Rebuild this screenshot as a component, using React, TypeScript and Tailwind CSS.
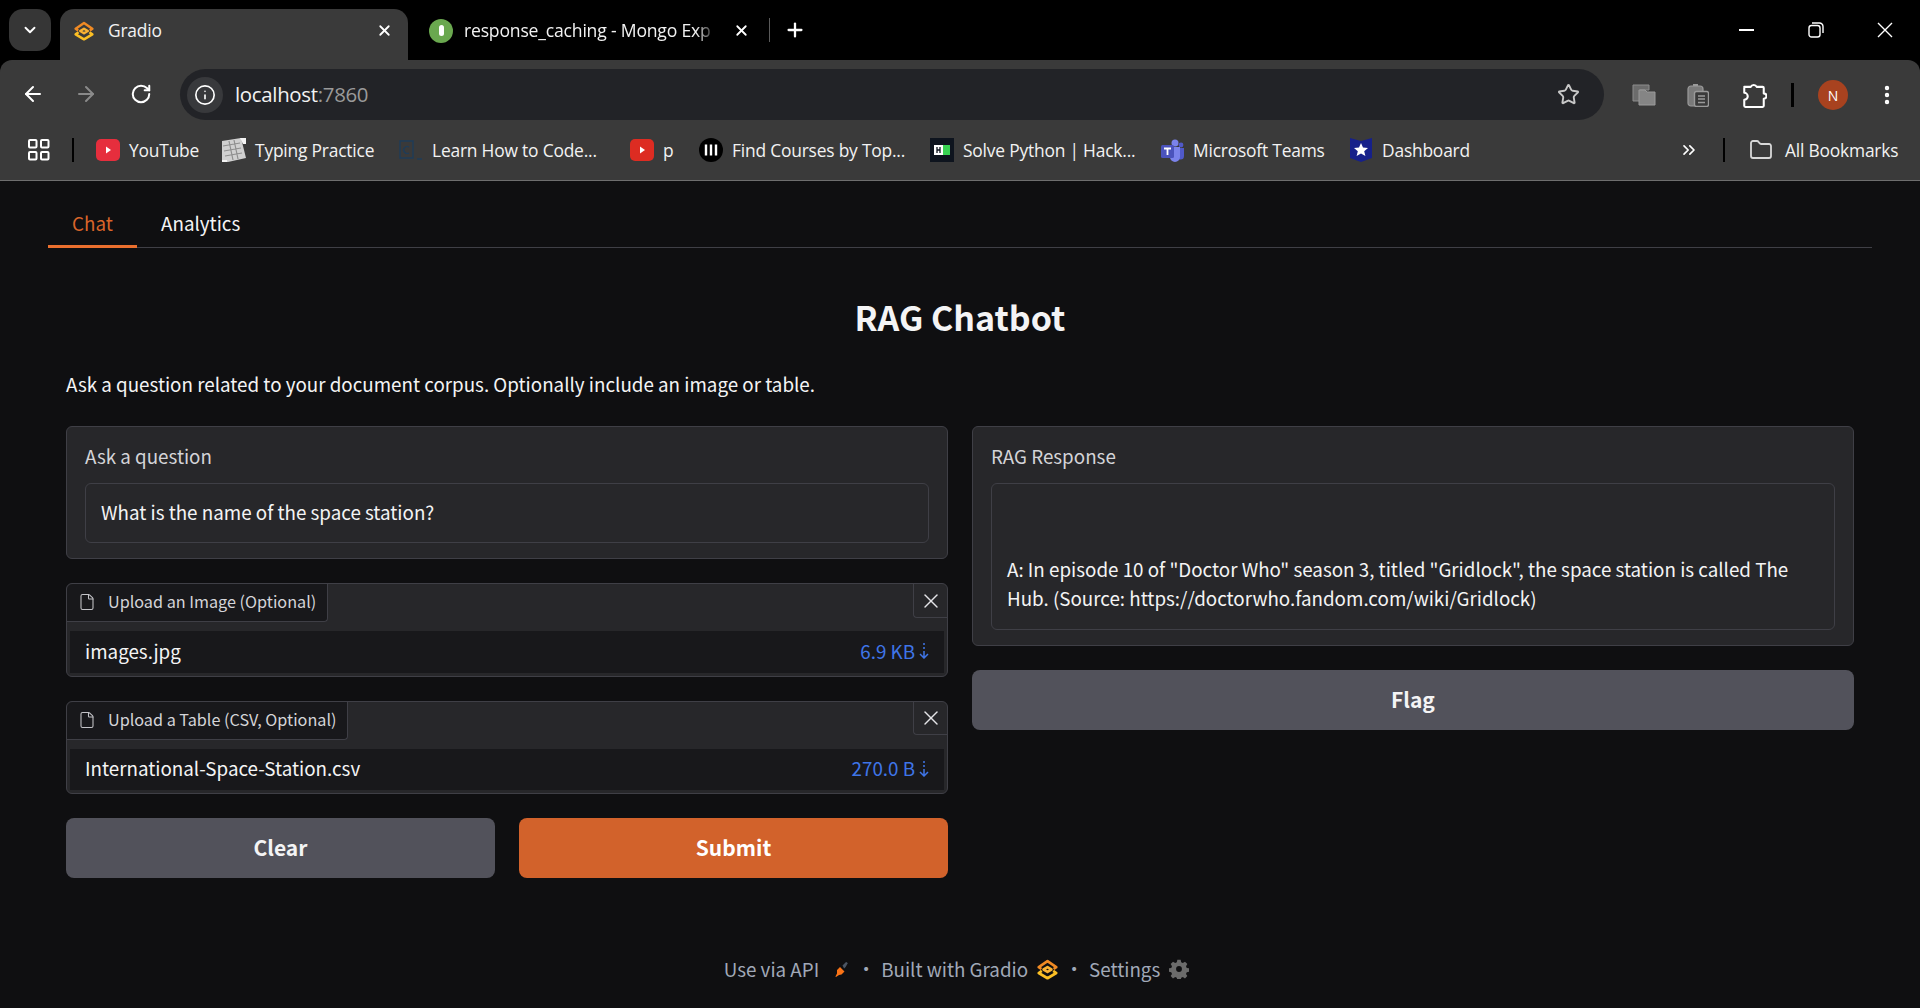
import React from "react";
import { ArrowLeft, ArrowRight, RotateCw, Star, ChevronDown, X, Plus, MoreVertical, File, Folder, ChevronsRight, Info } from "lucide-react";

const chrome = "font-['Open_Sans','Noto_Sans',sans-serif]";

function GradioLogo({ className }: { className: string }) {
  return (
    <svg viewBox="0 0 24 22" className={className} fill="none" strokeWidth="3" strokeLinejoin="round">
      <path d="M5.500 12.500 2 15l10 6 10-6-3.500-2.500" stroke="#fbbf24" />
      <path d="M7.500 11 12 8.300l4.500 2.700L12 13.700z" stroke="#f9b233" />
      <path d="M5 10.500 2 8.300 12 1.500l10 6.800-3 2.200" stroke="#f08a24" />
    </svg>
  );
}

function Yt({ c }: { c: string }) {
  return (
    <svg viewBox="0 0 24 24" className="w-6 h-6 shrink-0">
      <rect y="1" width="24" height="22" rx="5" fill={c} />
      <path d="M10 8.500l5 3.500-5 3.500z" fill="#fff" />
    </svg>
  );
}

function Typing() {
  return (
    <svg viewBox="0 0 24 24" className="w-6 h-6 shrink-0">
      <path d="M0 3 19 0l5 20-18 4H0z" fill="#d0d0d0" />
      <path d="M1 8l17-3M2 13l17-3M3 18l17-3M7 3l4 19M12 2l4 19" stroke="#8f8f8f" strokeWidth="1.200" />
      <path d="M18 0h6v6h-3zM0 22h5v2H0z" fill="#f4f4f4" />
    </svg>
  );
}

function Cc() {
  return (
    <svg viewBox="0 0 24 24" className="w-6 h-6 shrink-0" fill="none" stroke="#1f3c58" strokeWidth="1.400">
      <path d="M1 20V3h13v17zM18 21h5" />
      <path d="M10 9a3.500 3.500 0 1 0 0 6" />
    </svg>
  );
}

function Ph() {
  return (
    <svg viewBox="0 0 24 24" className="w-6 h-6 shrink-0">
      <circle cx="12" cy="12" r="12" fill="#000" />
      <path d="M7 6.500v11M12 6.500v11M17 6.500v11" stroke="#fff" strokeWidth="2.400" />
    </svg>
  );
}

function Hr() {
  return (
    <svg viewBox="0 0 24 24" className="w-6 h-6 shrink-0">
      <rect width="24" height="24" fill="#0e141e" />
      <rect x="4" y="7" width="9" height="10" fill="#fff" />
      <rect x="13" y="7" width="7" height="10" fill="#39d353" />
      <path d="M7 9v6M10 9v6M7 12h3" stroke="#0e141e" strokeWidth="1.300" />
    </svg>
  );
}

function Teams() {
  return (
    <svg viewBox="0 0 24 24" className="w-6 h-6 shrink-0">
      <circle cx="15" cy="5" r="3.500" fill="#7b83eb" />
      <circle cx="21" cy="7" r="2.400" fill="#5059c9" />
      <path d="M17 10h7v8a3.500 3.500 0 0 1-7 0z" fill="#5059c9" />
      <path d="M9 9h11v10a5 5 0 0 1-10 0z" fill="#7b83eb" />
      <rect x="1" y="7" width="13" height="13" rx="1.500" fill="#4b53bc" />
      <path d="M4 10.500h7M7.500 10.500V17" stroke="#fff" strokeWidth="1.800" />
    </svg>
  );
}

function Dash() {
  return (
    <svg viewBox="0 0 24 24" className="w-6 h-6 shrink-0">
      <path d="M1 0l11 3 11-3v20l-11 4-11-4z" fill="#16208a" />
      <path d="M12 5l2 4.600 5 .4-3.800 3.200 1.200 4.800-4.400-2.600L7.600 18l1.200-4.800L5 10l5-.4z" fill="#fff" />
    </svg>
  );
}

function Bookmark({ icon, label, w }: { icon: React.ReactNode; label: string; w: string }) {
  return (
    <div className={`flex items-center gap-[9px] shrink-0 ${w}`}>
      {icon}
      <span className="whitespace-nowrap text-[17.4px] tracking-[-0.2px] text-[#f2f2f2]">{label}</span>
    </div>
  );
}

function BrowserChrome() {
  return (
    <div className={`${chrome} shrink-0 bg-black`}>
      <div className="h-[60px] flex pl-[9px] pt-[9px]">
        <div className="w-[42px] h-[42px] rounded-[14px] bg-[#363636] flex items-center justify-center text-white">
          <ChevronDown size={18} strokeWidth={2.500} />
        </div>
        <div className="ml-[9px] w-[348px] h-[51px] rounded-t-[14px] bg-[#3a3a3a] flex items-center pl-[14px] pr-[15px] pb-[8px]">
          <GradioLogo className="w-[20px] h-[20px]" />
          <span className="ml-[14px] text-[17.4px] tracking-[-0.2px] text-[#f2f2f2]">Gradio</span>
          <X size={17} strokeWidth={2.500} className="ml-auto text-white" />
        </div>
        <div className="w-[361px] h-[51px] flex items-center pl-[21px] pb-[8px]">
          <div className="w-6 h-6 rounded-full bg-[#6aa84f] flex items-center justify-center shrink-0">
            <div className="w-[5px] h-[11px] rounded-full bg-white" />
          </div>
          <span className="ml-[11px] w-[252px] overflow-hidden whitespace-nowrap text-[17.6px] tracking-[-0.2px] text-[#f2f2f2] [mask-image:linear-gradient(to_right,black_92%,transparent)]">response_caching - Mongo Exp</span>
          <X size={17} strokeWidth={2.500} className="ml-[17px] text-white shrink-0" />
        </div>
        <div className="w-px h-6 bg-[#5a5a5a] mt-[9px]" />
        <Plus size={22} strokeWidth={2.500} className="ml-[14px] mt-[10px] text-white" />
        <div className="ml-auto flex items-start pt-[13px] text-white">
          <div className="w-[15px] h-[1.500px] bg-white mt-[7px] mr-[54px]" />
          <svg viewBox="0 0 16 16" className="w-[16px] h-[16px] mr-[53px]" fill="none" stroke="#fff" strokeWidth="1.400">
            <rect x="1" y="3.500" width="11" height="11.500" rx="2.500" />
            <path d="M4 1h7.500A3.500 3.500 0 0 1 15 4.500V11" />
          </svg>
          <svg viewBox="0 0 16 16" className="w-[16px] h-[16px] mr-[27px]" fill="none" stroke="#fff" strokeWidth="1.400">
            <path d="M1 1l14 14M15 1 1 15" />
          </svg>
        </div>
      </div>
      <div className="bg-[#3a3a3a] rounded-t-[12px] border-b border-[#6e6e6e] h-[121px]">
        <div className="h-[60px] flex items-start pt-[9px] pl-[21px] text-white">
          <ArrowLeft size={24} strokeWidth={2} className="mt-[13px]" />
          <ArrowRight size={24} strokeWidth={2} className="ml-[29px] mt-[13px] text-[#8a8a8a]" />
          <RotateCw size={22} strokeWidth={2.200} className="ml-[32px] mt-[14px]" />
          <div className="ml-[28px] w-[1424px] h-[51px] rounded-full bg-[#222327] flex items-center pl-[7px] pr-[24px]">
            <div className="w-9 h-9 rounded-full bg-[#38393c] flex items-center justify-center">
              <Info size={22} strokeWidth={1.800} />
            </div>
            <span className="ml-[12px] text-[20.4px] tracking-[-0.3px] text-[#f2f2f2]">localhost<span className="text-[#9a9a9a]">:7860</span></span>
            <Star size={23} strokeWidth={2} className="ml-auto text-[#c8c8c8]" />
          </div>
          <div className="flex items-center h-[42px] mt-[5px]">
            <svg viewBox="0 0 24 22" className="ml-[28px] w-6 h-[22px]">
              <path d="M1 1h16v5H8v11H1z" fill="#6c6c6c" stroke="#8c8c8c" strokeWidth="1" />
              <path d="M7 6h6l2 2h8v13H7z" fill="#858585" stroke="#9a9a9a" strokeWidth="1" />
            </svg>
            <svg viewBox="0 0 22 24" className="ml-[31px] w-[22px] h-6">
              <rect x="1" y="3" width="15" height="20" rx="3" fill="#7a7a7a" stroke="#9a9a9a" strokeWidth="1.200" />
              <path d="M6 3h5V1H6z" fill="#9a9a9a" />
              <rect x="7.500" y="8.500" width="14" height="15" rx="2" fill="#3a3a3a" stroke="#9a9a9a" strokeWidth="1.400" />
              <path d="M11 13h7M11 16h7M11 19.500h7" stroke="#9a9a9a" strokeWidth="1.400" />
            </svg>
            <svg viewBox="0 0 24 24" className="ml-[32px] w-[26px] h-[26px]" fill="none" stroke="#fff" strokeWidth="1.900" strokeLinejoin="round">
              <path d="M3 4.500h6a3 3 0 0 1 5.500 0H20a1 1 0 0 1 1 1v5a2.500 2.500 0 0 1 0 5V22a1 1 0 0 1-1 1H4a1 1 0 0 1-1-1v-5.500a2.800 2.800 0 0 0 0-6.500V5.500a1 1 0 0 1 1-1z" />
            </svg>
            <div className="ml-[24px] w-[3px] h-[24px] bg-black" />
            <div className="ml-[24px] w-[30px] h-[30px] rounded-full bg-[#a8421f] flex items-center justify-center text-[14px] text-white">N</div>
            <MoreVertical size={24} strokeWidth={2.400} className="ml-[27px]" />
          </div>
        </div>
        <div className="h-[60px] flex items-center pl-[28px]">
          <svg viewBox="0 0 22 22" className="w-[22px] h-[22px] shrink-0" fill="none" stroke="#fff" strokeWidth="2">
            <rect x="1" y="1" width="7.500" height="7.500" rx="1" />
            <rect x="13" y="1" width="7.500" height="7.500" rx="1" />
            <rect x="1" y="13" width="7.500" height="7.500" rx="1" />
            <rect x="13" y="13" width="7.500" height="7.500" rx="1" />
          </svg>
          <div className="ml-[22px] mr-[22px] w-[2px] h-6 bg-black shrink-0" />
          <Bookmark w="w-[126px]" icon={<Yt c="#e62e3d" />} label="YouTube" />
          <Bookmark w="w-[177px]" icon={<Typing />} label="Typing Practice" />
          <Bookmark w="w-[231px]" icon={<Cc />} label="Learn How to Code..." />
          <Bookmark w="w-[69px]" icon={<Yt c="#dd2c22" />} label="p" />
          <Bookmark w="w-[231px]" icon={<Ph />} label="Find Courses by Top..." />
          <Bookmark w="w-[230px]" icon={<Hr />} label="Solve Python | Hack..." />
          <Bookmark w="w-[189px]" icon={<Teams />} label="Microsoft Teams" />
          <Bookmark w="w-[330px]" icon={<Dash />} label="Dashboard" />
          <ChevronsRight size={20} strokeWidth={2} className="text-white shrink-0" />
          <div className="ml-[24px] w-[2px] h-6 bg-black shrink-0" />
          <Folder size={24} strokeWidth={1.800} className="ml-[24px] text-[#d8d8d8] shrink-0" />
          <span className="ml-[12px] whitespace-nowrap text-[17.4px] tracking-[-0.2px] text-[#f2f2f2]">All Bookmarks</span>
        </div>
      </div>
    </div>
  );
}

function DownArrow() {
  return (
    <svg viewBox="0 0 10 16" className="w-[10px] h-[16px] ml-[4px]" fill="none" stroke="#3f75e8" strokeWidth="1.500">
      <path d="M5 0v2M5 4v2M5 8v7M1 11l4 4 4-4" />
    </svg>
  );
}

function FileBlock({ label, labelW, name, size, h, rowH, xH }: { label: string; labelW: string; name: string; size: string; h: string; rowH: string; xH: string }) {
  return (
    <div className={`relative ${h} border border-[#3f3f46] rounded-[6px] bg-[#27272a] flex flex-col`}>
      <div className={`h-[38px] ${labelW} flex items-center gap-[12px] pl-[11px] pb-[2px] bg-[#18181b] border-r border-b border-[#3f3f46] rounded-br-[4px] rounded-tl-[6px] text-[#d4d4d8] text-[16.2px]`}>
        <File size={18} strokeWidth={1.400} className="text-[#c4c4c8]" />
        <span className="whitespace-nowrap">{label}</span>
      </div>
      <div className={`mt-[9px] ml-[3px] mr-[3px] ${rowH} bg-[#18181b] flex items-center justify-between pl-[15px] pr-[15px] pb-[2px]`}>
        <span className="text-[18.8px] text-[#f4f4f5]">{name}</span>
        <span className="flex items-center text-[#3f75e8] text-[18.8px]">{size}<DownArrow /></span>
      </div>
      <div className={`absolute right-0 top-0 w-[34px] ${xH} border-l border-b border-[#3f3f46] rounded-bl-[4px] rounded-tr-[6px] flex items-center justify-center`}>
        <X size={24} strokeWidth={1.400} className="text-[#e4e4e7]" />
      </div>
    </div>
  );
}

function Dot() {
  return <span className="w-[4px] flex justify-center">·</span>;
}

function Footer() {
  return (
    <div className="flex items-center text-[18.8px] text-[#a1a9b8] h-[30px]">
      <span>Use via API</span>
      <svg viewBox="0 0 16 16" className="w-[16px] h-[16px] ml-[15px]">
        <path d="M8.500 4.500 12 1l1.200.4.400 1.200-2 3.400-1.500 1.500z" fill="#4b5563" />
        <path d="M3 9l3-3 4.500 4.500-3 3-2.500.5-3 2-.6-.6 1.600-3z" fill="#f97316" />
      </svg>
      <span className="ml-[14px]"><Dot /></span>
      <span className="ml-[13px]">Built with Gradio</span>
      <GradioLogo className="w-[21px] h-[21px] ml-[9px]" />
      <span className="ml-[14px]"><Dot /></span>
      <span className="ml-[13px]">Settings</span>
      <svg viewBox="0 0 24 24" className="w-[20px] h-[20px] ml-[9px]" fill="#6b6b6b">
        <path fillRule="evenodd" d="M10 1h4l.6 3 2 .9 2.600-1.600 2.800 2.800-1.600 2.600.9 2 3 .6v4l-3 .6-.9 2 1.600 2.600-2.800 2.800-2.600-1.600-2 .9-.6 3h-4l-.6-3-2-.9-2.600 1.600-2.800-2.800 1.600-2.600-.9-2-3-.6v-4l3-.6.9-2-1.600-2.600 2.800-2.800 2.600 1.600 2-.9zM12 8.500a3.500 3.500 0 1 0 0 7 3.500 3.500 0 0 0 0-7z" />
      </svg>
    </div>
  );
}

export default function App() {
  return (
    <div className="w-full h-[1008px] overflow-hidden flex flex-col bg-[#0f0f11]">
      <BrowserChrome />
      <div className="flex-1 px-[48px] font-['Noto_Sans_CJK_SC','Noto_Sans',sans-serif]">
        <div className="h-[67px] border-b border-[#3f3f46] flex">
          <div className="w-[89px] h-[67px] flex items-start justify-center pt-[28px] leading-[28px] border-b-[3px] border-[#ea6f2e] text-[#d9652a] text-[18.8px]">Chat</div>
          <div className="ml-[24px] h-[66px] flex items-start pt-[28px] leading-[28px] text-[18.8px] text-[#f4f4f5]">Analytics</div>
        </div>
        <div className="px-[18px]">
          <h1 className="mt-[46px] text-center text-[34px] leading-[46px] font-bold text-[#f4f4f5]">RAG Chatbot</h1>
          <p className="mt-[29px] text-[18.8px] leading-[30px] text-[#f4f4f5]">Ask a question related to your document corpus. Optionally include an image or table.</p>
          <div className="mt-[27px] grid grid-cols-2 gap-[24px] items-start">
            <div className="flex flex-col gap-[24px]">
              <div className="h-[133px] rounded-[6px] border border-[#3f3f46] bg-[#27272a] px-[18px] pt-[14px]">
                <div className="text-[18.8px] leading-[30px] text-[#d4d4d8]">Ask a question</div>
                <div className="mt-[12px] h-[60px] rounded-[6px] border border-[#3f3f46] flex items-center px-[15px] pb-[2px] text-[18.8px] text-[#f4f4f5]">What is the name of the space station?</div>
              </div>
              <FileBlock h="h-[94px]" rowH="h-[42px]" xH="h-[34px]" label="Upload an Image (Optional)" labelW="w-[261px]" name="images.jpg" size="6.9 KB" />
              <FileBlock h="h-[93px]" rowH="h-[41px]" xH="h-[33px]" label="Upload a Table (CSV, Optional)" labelW="w-[281px]" name="International-Space-Station.csv" size="270.0 B" />
              <div className="grid grid-cols-2 gap-[24px]">
                <button className="h-[60px] rounded-[8px] bg-[#52525b] text-[#f4f4f5] text-[21px] font-bold">Clear</button>
                <button className="h-[60px] rounded-[8px] bg-[#d2622b] text-white text-[21px] font-bold">Submit</button>
              </div>
            </div>
            <div className="flex flex-col gap-[24px]">
              <div className="h-[220px] rounded-[6px] border border-[#3f3f46] bg-[#27272a] px-[18px] pt-[14px]">
                <div className="text-[18.8px] leading-[30px] text-[#d4d4d8]">RAG Response</div>
                <div className="mt-[12px] h-[147px] rounded-[6px] border border-[#3f3f46] px-[15px] pt-[70px] text-[18.8px] leading-[29.400px] text-[#f4f4f5]">A: In episode 10 of "Doctor Who" season 3, titled "Gridlock", the space station is called The Hub. (Source: https://doctorwho.fandom.com/wiki/Gridlock)</div>
              </div>
              <button className="h-[60px] rounded-[8px] bg-[#52525b] text-[#f4f4f5] text-[21px] font-bold">Flag</button>
            </div>
          </div>
          <div className="mt-[76px] flex justify-center pr-[7px]">
            <Footer />
          </div>
        </div>
      </div>
    </div>
  );
}
